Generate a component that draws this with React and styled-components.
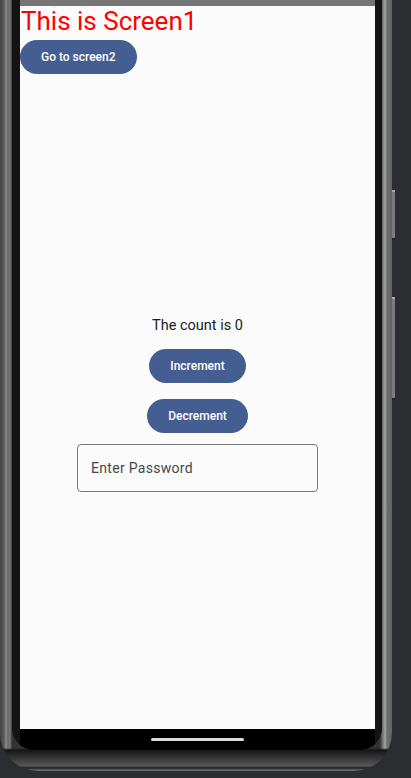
import { createGlobalStyle, styled } from "styled-components";

const GlobalStyle = createGlobalStyle`
  html, body {
    margin: 0;
    padding: 0;
    background: #2b2d31;
    font-family: Roboto, "Noto Sans", sans-serif;
  }
`;

const Stage = styled.div`
  width: 411px;
  height: 778px;
  overflow: hidden;
`;

const Phone = styled.div`
  position: relative;
  width: 392px;
  height: 771px;
  box-sizing: border-box;
  padding: 0 10px 21px 12px;
  border-radius: 0 0 38px 38px;
  background:
    linear-gradient(180deg, transparent 748px, #151515 750px, #3e3e3e 760px, #585858 766px, #1c1c1c 768px, #6a6a6a 770px),
    linear-gradient(90deg, #454545 0, #5a5a5a 4px, #8a8a8a 6px, #666 8px, #7a7a7a 10px, #333 12px, #333 380px, #7a7a7a 383px, #a4a4a4 385px, #707070 387px, #626262 392px);
`;

const SideKey = styled.div`
  position: absolute;
  right: -3px;
  width: 3px;
  top: ${(p) => p.top}px;
  height: ${(p) => p.h}px;
  background: #7a7a7a;
  border-top: 2px solid #aaa;
  border-bottom: 2px solid #222;
  box-sizing: border-box;
`;

const Bezel = styled.div`
  height: 100%;
  box-sizing: border-box;
  padding: 0 7px 0 8px;
  background: #131313;
  border-radius: 0 0 22px 22px;
  overflow: hidden;
`;

const Screen = styled.div`
  height: 100%;
  display: flex;
  flex-direction: column;
`;

const StatusBar = styled.div`
  height: 6px;
  background: #757575;
`;

const Content = styled.div`
  flex: 1;
  display: flex;
  flex-direction: column;
  background: #fbfbfb;
`;

const Title = styled.div`
  color: #ff0000;
  font-size: 26px;
  line-height: 30px;
  padding-left: 1px;
`;

const PillButton = styled.button`
  height: 34px;
  padding: 0 21px;
  border: 0;
  border-radius: 17px;
  background: #455e91;
  color: #ffffff;
  font-family: Roboto, sans-serif;
  font-size: 12px;
  font-weight: 500;
  letter-spacing: 0;
  cursor: pointer;
  align-self: ${(p) => p.align || "center"};
  margin-top: ${(p) => p.mt || 0}px;
`;

const Center = styled.div`
  flex: 1;
  display: flex;
  flex-direction: column;
  align-items: center;
  justify-content: center;
  padding-top: 6px;
`;

const CountText = styled.div`
  font-size: 14.5px;
  line-height: 17px;
  color: #1b1b1f;
`;

const Field = styled.div`
  margin-top: 11px;
  width: 241px;
  height: 48px;
  box-sizing: border-box;
  border: 1px solid #74777f;
  border-radius: 4px;
  display: flex;
  align-items: center;
  padding-left: 13px;
  font-size: 14px;
  color: #44474e;
  letter-spacing: 0.3px;
`;

const NavBar = styled.div`
  height: 21px;
  background: #000;
  display: flex;
  justify-content: center;
  padding-top: 9px;
  box-sizing: border-box;
`;

const HomeIndicator = styled.div`
  width: 93px;
  height: 3px;
  border-radius: 2px;
  background: #dcdcdc;
`;

export default function App() {
  return (
    <Stage>
      <GlobalStyle />
      <Phone>
        <SideKey top={190} h={50} />
        <SideKey top={297} h={103} />
        <Bezel>
          <Screen>
            <StatusBar />
            <Content>
              <Title>This is Screen1</Title>
              <PillButton align="flex-start" mt={4}>
                Go to screen2
              </PillButton>
              <Center>
                <CountText>The count is 0</CountText>
                <PillButton mt={15}>Increment</PillButton>
                <PillButton mt={16}>Decrement</PillButton>
                <Field>Enter Password</Field>
              </Center>
            </Content>
            <NavBar>
              <HomeIndicator />
            </NavBar>
          </Screen>
        </Bezel>
      </Phone>
    </Stage>
  );
}
